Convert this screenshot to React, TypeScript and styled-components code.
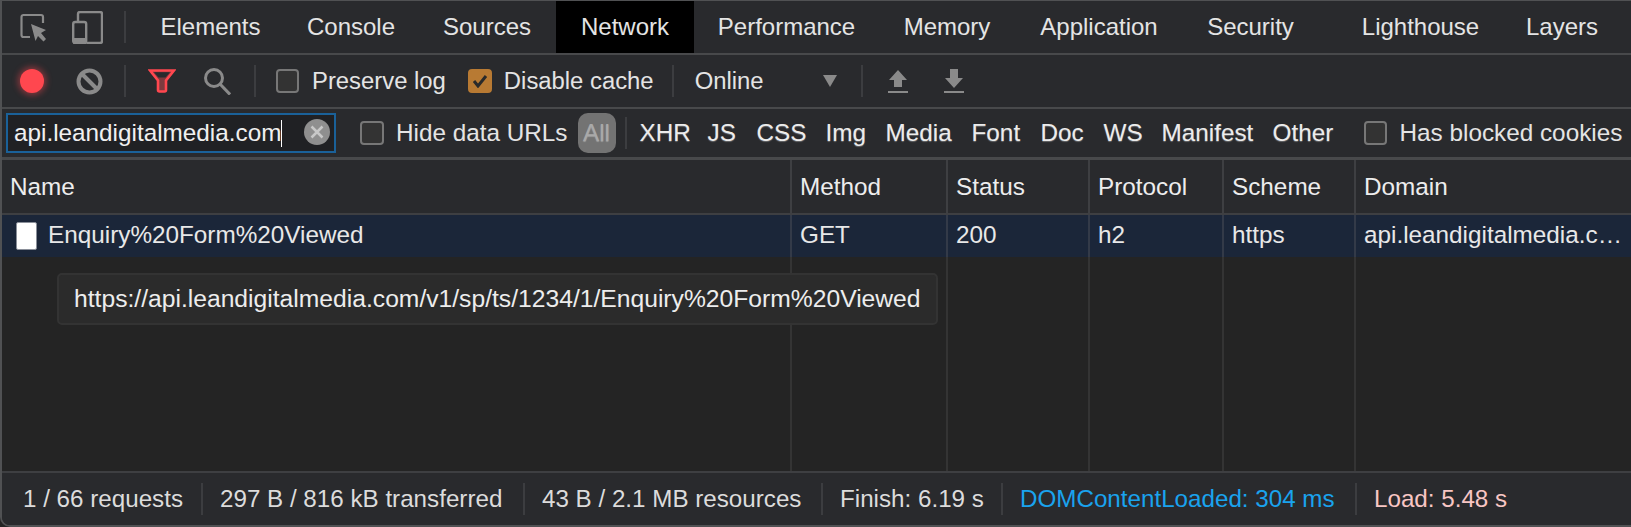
import React from "react";
import styled, { createGlobalStyle } from "styled-components";

const Global = createGlobalStyle`
  html, body { margin: 0; padding: 0; background: #242424; }
  body { font-family: "Liberation Sans", Arial, sans-serif; color: #e8e8e8; }
  * { box-sizing: border-box; }
`;

const Shell = styled.div`
  width: 1631px; height: 527px; display: flex; flex-direction: column;
  background: #242424; border: solid #505153; border-width: 1px 0 2px 2px; border-radius: 0 0 0 10px;
  overflow: hidden; position: relative;
`;
const Bar = styled.div<{ $h: number; $line?: number; $fs: number }>`
  height: ${p => p.$h}px; flex: none; display: flex; align-items: center; font-size: ${p => p.$fs}px;
  background: #292a2d; border-bottom: ${p => p.$line ?? 2}px solid #48494b; white-space: nowrap;
`;
const IconSlot = styled.div<{ $w: number }>`
  width: ${p => p.$w}px; flex: none; display: flex; justify-content: center; align-items: center;
`;
const Sep = styled.div<{ $h?: number; $ml?: number; $mr?: number }>`
  width: 2px; height: ${p => p.$h ?? 32}px; background: #3c3d40; flex: none;
  margin-left: ${p => p.$ml ?? 0}px; margin-right: ${p => p.$mr ?? 0}px;
`;
const Tab = styled.div<{ $w: number; $active?: boolean }>`
  width: ${p => p.$w}px; flex: none; height: 100%; display: flex; align-items: center; justify-content: center;
  background: ${p => (p.$active ? "#000" : "transparent")}; color: #e4e4e4;
`;
const Box = styled.span<{ $on?: boolean; $size?: number }>`
  width: ${p => p.$size ?? 23}px; height: 24px; border-radius: 4px; flex: none; display: flex; align-items: center; justify-content: center;
  border: 2px solid ${p => (p.$on ? "#b87a33" : "#777")}; background: ${p => (p.$on ? "#b87a33" : "#333")};
`;
const Check = styled.label<{ $ml?: number; $gap?: number }>`
  display: flex; align-items: center; gap: ${p => p.$gap ?? 13}px; color: #e4e4e4; flex: none;
  margin-left: ${p => p.$ml ?? 0}px;
`;
const Record = styled.span`
  width: 24px; height: 24px; border-radius: 50%; background: #ff474f; box-shadow: 0 0 6px 2px rgba(255, 71, 79, .45);
`;
const Online = styled.span`
  width: 128px; flex: none; color: #e4e4e4;
`;
const Search = styled.div`
  width: 330px; height: 40px; margin-left: 4px; border: 2px solid #1a6199; background: #202124;
  display: flex; align-items: center; padding-left: 6px; position: relative; flex: none; color: #f0f0f0;
`;
const Caret = styled.span`
  width: 1px; height: 27px; background: #fff; flex: none;
`;
const Clear = styled.span`
  position: absolute; right: 4px; top: 4px; width: 26px; height: 26px;
`;
const FilterType = styled.span<{ $w: number }>`
  width: ${p => p.$w}px; color: #ececec; flex: none; text-shadow: 0 1px 1px rgba(255, 255, 255, .3);
`;
const AllPill = styled.span`
  width: 38px; height: 40px; background: #737373; border-radius: 10px; color: #a9a9a9;
  display: flex; align-items: center; justify-content: center; margin-left: 10px; flex: none;
  text-shadow: 0 1px 1px rgba(255, 255, 255, .3);
`;
const Grid = styled.div`
  flex: 1; display: grid; grid-template-columns: 790px 156px 142px 134px 132px 1fr;
  grid-template-rows: 55px 42px 1fr; min-height: 0; position: relative; font-size: 24.3px;
`;
const Head = styled.div<{ $last?: boolean }>`
  background: #292a2d; border-bottom: 2px solid #3e3f42; border-right: ${p => (p.$last ? 0 : 2)}px solid #3e3f42;
  display: flex; align-items: center; padding-left: 8px; color: #ededed;
`;
const Cell = styled.div<{ $last?: boolean }>`
  background: #1b2639; border-right: ${p => (p.$last ? 0 : 2)}px solid #333a48;
  display: flex; align-items: center; padding: 0 0 2px 8px; color: #e8e8e8; white-space: nowrap; overflow: hidden;
`;
const Empty = styled.div<{ $last?: boolean }>`
  border-right: ${p => (p.$last ? 0 : 2)}px solid #343434;
`;
const FileIcon = styled.span`
  width: 21px; height: 28px; background: #fff; border: 1px solid #8a8f99; border-radius: 2px;
  margin: 2px 11px 0 6px; flex: none;
`;
const Tooltip = styled.div`
  position: absolute; left: 55px; top: 113px; height: 52px; width: 881px; font-size: 24.67px;
  background: #2b2b2b; border: 2px solid #333; border-radius: 5px; color: #ededed;
  display: flex; align-items: center; padding-left: 15px; white-space: nowrap;
`;
const Status = styled.div`
  height: 54px; flex: none; display: flex; align-items: center; background: #292a2d; font-size: 24.2px;
  border-top: 2px solid #3e3f42; white-space: nowrap;
`;
const Stat = styled.span<{ $c?: string; $w: number; $pl?: number }>`
  color: ${p => p.$c ?? "#dcdcdc"}; width: ${p => p.$w}px; padding-left: ${p => p.$pl ?? 17}px; flex: none;
`;
const Ico = styled.svg`
  display: block;
`;

const tabs: [string, number, boolean?][] = [
  ["Elements", 147], ["Console", 134], ["Sources", 138], ["Network", 138, true], ["Performance", 185],
  ["Memory", 136], ["Application", 168], ["Security", 135], ["Lighthouse", 205], ["Layers", 78],
];
const filters: [string, number][] = [
  ["XHR", 68], ["JS", 49], ["CSS", 69], ["Img", 60], ["Media", 86], ["Font", 69], ["Doc", 63], ["WS", 58], ["Manifest", 111], ["Other", 91],
];
const cols = ["Name", "Method", "Status", "Protocol", "Scheme", "Domain"];
const stats: [string, number, string?, number?][] = [
  ["1 / 66 requests", 199, undefined, 21],
  ["297 B / 816 kB transferred", 320],
  ["43 B / 2.1 MB resources", 296],
  ["Finish: 6.19 s", 178],
  ["DOMContentLoaded: 304 ms", 352, "#1aa3ee"],
  ["Load: 5.48 s", 200, "#f8c6c4"],
];
const gray = "#8a8a8a";

export default function App() {
  return (
    <Shell>
      <Global />
      <Bar $h={54} $fs={24}>
        <IconSlot $w={62}>
          <Ico width="30" height="31" viewBox="0 0 30 31" fill="none">
            <path d="M12 25H5.500a2 2 0 0 1-2-2V5a2 2 0 0 1 2-2H23a2 2 0 0 1 2 2v6" stroke={gray} strokeWidth="2.200" />
            <path d="M13 12l15 6-5 3 5 6-2.500 2.500-5.500-5.500-2.500 5z" fill={gray} />
          </Ico>
        </IconSlot>
        <IconSlot $w={46}>
          <Ico width="31" height="33" viewBox="0 0 31 33" fill="none">
            <path d="M6 10V3a2 2 0 0 1 2-2h20a2 2 0 0 1 2 2v27a2 2 0 0 1-2 2H15" stroke={gray} strokeWidth="2.400" />
            <rect x="1.200" y="11" width="13" height="21" rx="2" stroke={gray} strokeWidth="2.400" />
            <rect x="1" y="27" width="14" height="6" rx="1" fill={gray} />
          </Ico>
        </IconSlot>
        <Sep $ml={14} $mr={11} />
        {tabs.map(([t, w, a]) => <Tab key={t} $w={w} $active={a}>{t}</Tab>)}
      </Bar>
      <Bar $h={54} $fs={23.85}>
        <IconSlot $w={60}><Record /></IconSlot>
        <IconSlot $w={54}>
          <Ico width="27" height="27" viewBox="0 0 27 27" fill="none">
            <circle cx="13.500" cy="13.500" r="11" stroke={gray} strokeWidth="4" />
            <path d="M6 6l15 15" stroke={gray} strokeWidth="4" />
          </Ico>
        </IconSlot>
        <Sep $ml={8} />
        <IconSlot $w={71}>
          <Ico width="28" height="24" viewBox="0 0 28 24" fill="none">
            <path d="M2 1.500h24l-8 10v9.500a1.500 1.500 0 0 1-1.500 1.500h-5A1.500 1.500 0 0 1 10 21v-9.500z" fill="#7d3a3e" stroke="#ff474f" strokeWidth="2.600" />
            <path d="M6 3.200h16l-4.500 5.300h-7z" fill="#292a2d" />
          </Ico>
        </IconSlot>
        <IconSlot $w={41}>
          <Ico width="27" height="27" viewBox="0 0 27 27" fill="none">
            <circle cx="10" cy="10" r="8.500" stroke={gray} strokeWidth="3" />
            <path d="M16 16l10 10.500" stroke={gray} strokeWidth="3" />
          </Ico>
        </IconSlot>
        <Sep $ml={16} $mr={20} />
        <Check><Box />Preserve log</Check>
        <Check $ml={22} $gap={12}><Box $on $size={24}>
          <Ico width="16" height="14" viewBox="0 0 16 14" fill="none"><path d="M2 7l4 5 8-10" stroke="#2a2a2a" strokeWidth="3" /></Ico>
        </Box>Disable cache</Check>
        <Sep $ml={18} $mr={21} />
        <Online>Online</Online>
        <Ico width="14" height="12" viewBox="0 0 14 12"><path d="M0 0h14l-7 12z" fill={gray} /></Ico>
        <Sep $ml={24} />
        <IconSlot $w={70}>
          <Ico width="20" height="25" viewBox="0 0 20 25"><path d="M10 1l9 10h-5v7H6v-7H1zM0 22h20v2H0z" fill={gray} /></Ico>
        </IconSlot>
        <IconSlot $w={42}>
          <Ico width="20" height="25" viewBox="0 0 20 25"><path d="M6 0h8v9h5L10 19 1 9h5zM0 22h20v2H0z" fill={gray} /></Ico>
        </IconSlot>
      </Bar>
      <Bar $h={51} $line={3} $fs={24.3}>
        <Search>
          api.leandigitalmedia.com<Caret />
          <Clear>
            <Ico width="26" height="26" viewBox="0 0 26 26" fill="none">
              <circle cx="13" cy="13" r="13" fill="#8f8f8f" />
              <path d="M7.500 7.500l11 11M18.500 7.500l-11 11" stroke="#c8c8c8" strokeWidth="2.500" />
            </Ico>
          </Clear>
        </Search>
        <Check $ml={24} $gap={12}><Box $size={24} />Hide data URLs</Check>
        <AllPill>All</AllPill>
        <Sep $h={32} $ml={9} $mr={13} />
        {filters.map(([f, w]) => <FilterType key={f} $w={w}>{f}</FilterType>)}
        <Check $gap={13}><Box $size={23} />Has blocked cookies</Check>
      </Bar>
      <Grid>
        {cols.map((c, i) => <Head key={c} $last={i === 5}>{c}</Head>)}
        <Cell><FileIcon />Enquiry%20Form%20Viewed</Cell>
        <Cell>GET</Cell>
        <Cell>200</Cell>
        <Cell>h2</Cell>
        <Cell>https</Cell>
        <Cell $last>api.leandigitalmedia.c…</Cell>
        {cols.map((c, i) => <Empty key={c} $last={i === 5} />)}
        <Tooltip>https://api.leandigitalmedia.com/v1/sp/ts/1234/1/Enquiry%20Form%20Viewed</Tooltip>
      </Grid>
      <Status>
        {stats.map(([s, w, c, pl], i) => (
          <React.Fragment key={s}>
            {i > 0 && <Sep $h={32} />}
            <Stat $w={w} $c={c} $pl={pl}>{s}</Stat>
          </React.Fragment>
        ))}
      </Status>
    </Shell>
  );
}
